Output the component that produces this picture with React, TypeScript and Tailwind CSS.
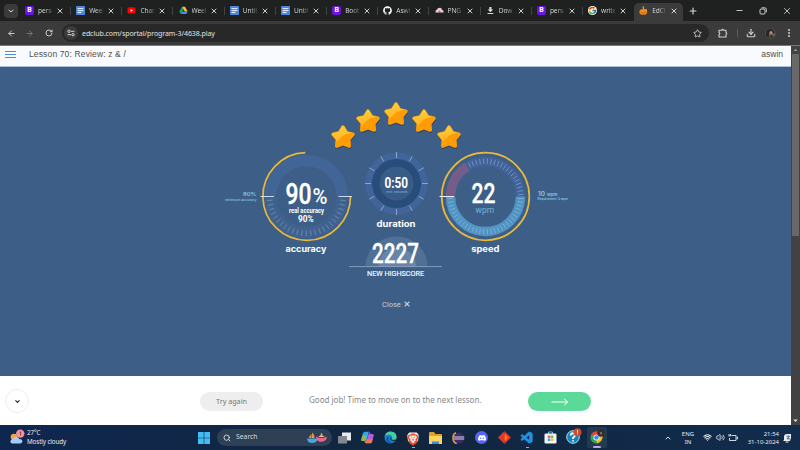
import React from "react";
import { ArrowLeft, ArrowRight, RotateCw, Star, Download, EllipsisVertical, X, Plus, Minus, ChevronDown, ChevronUp, Search, Wifi, Volume2 } from "lucide-react";
import { FaGithub } from "react-icons/fa";
import { FcGoogle } from "react-icons/fc";
import { SiDiscord, SiBrave } from "react-icons/si";
import { VscVscode } from "react-icons/vsc";

const Boot = () => (
  <span className="flex h-[9px] w-[9px] shrink-0 items-center justify-center rounded-[2px] bg-[#6a14dc] font-['Roboto',sans-serif] text-[7px] font-bold leading-none text-white">B</span>
);
const Doc = () => (
  <svg viewBox="0 0 9 9" className="h-[9px] w-[9px] shrink-0">
    <rect width="9" height="9" rx="0.8" fill="#4a86e4" />
    <path d="M1.6 2.6h5.8M1.6 4.6h5.8M1.6 6.5h3.8" stroke="#fff" strokeWidth="0.9" />
  </svg>
);
const Tube = () => (
  <svg viewBox="0 0 9 9" className="h-[9px] w-[9px] shrink-0">
    <rect x="0.5" y="1.3" width="8" height="6.2" rx="1.5" fill="#f00" />
    <path d="M3.6 3l2.6 1.4-2.6 1.4z" fill="#fff" />
  </svg>
);
const Drive = () => (
  <svg viewBox="0 0 9 9" className="h-[9px] w-[9px] shrink-0">
    <path d="M3 .8L.3 5.6l1.4 2.5L4.5 3.4z" fill="#1ea362" />
    <path d="M3 .8h3l2.7 4.8H5.8z" fill="#fbc02d" />
    <path d="M3.1 5.6h5.6L7.3 8.1H1.7z" fill="#4688f4" />
  </svg>
);
const Cloud = () => (
  <svg viewBox="0 0 9 9" className="h-[9px] w-[9px] shrink-0">
    <path d="M.4 6.400Q.2 4 2 3.600 2.800 1.600 4.600 1.900 6.600 1.600 7 3.800 8.900 4.200 8.600 6.400z" fill="#e8c9cd" />
    <path d="M3 6.400l1.500-2L6 6.400z" fill="#9d6470" />
  </svg>
);
const Down = () => (
  <svg viewBox="0 0 9 9" className="h-[9px] w-[9px] shrink-0">
    <path d="M3.3 1h2.2v2.6h1.7L4.4 6.3 1.6 3.6h1.7zM1.5 7h5.8v.9H1.5z" fill="#d6d6d6" />
  </svg>
);
const Pumpkin = () => (
  <svg viewBox="0 0 9 9" className="h-[9px] w-[9px] shrink-0">
    <ellipse cx="4.3" cy="5.9" rx="3.9" ry="2.8" fill="#f08a18" />
    <path d="M4 4L3.5.6 5 .3l.2 3.4 2.8-1-.4 2z" fill="#ee9420" />
    <path d="M2 6.3q2.4 1.6 4.8 0" stroke="#a84d06" strokeWidth=".6" fill="none" />
  </svg>
);

const tabs: { icon: React.ReactNode; label: string }[] = [
  { icon: <Boot />, label: "perso" },
  { icon: <Doc />, label: "Week" },
  { icon: <Tube />, label: "Chan" },
  { icon: <Drive />, label: "Week" },
  { icon: <Doc />, label: "Untitl" },
  { icon: <Doc />, label: "Untitl" },
  { icon: <Boot />, label: "Boot" },
  { icon: <FaGithub className="h-[9px] w-[9px] shrink-0 text-white" />, label: "Aswi" },
  { icon: <Cloud />, label: "PNG" },
  { icon: <Down />, label: "Dow" },
  { icon: <Boot />, label: "perso" },
  { icon: <FcGoogle className="h-[9px] w-[9px] shrink-0 rounded-full bg-white" />, label: "write" },
  { icon: <Pumpkin />, label: "EdClu" },
];

function TabStrip() {
  return (
    <div className="flex h-[21px] items-center bg-[#1f2120] text-[#dcdcdc]">
      <div className="ml-1 flex h-[14px] w-[14px] shrink-0 items-center justify-center rounded-[4px] bg-[#3a3b3a]">
        <ChevronDown className="h-[8px] w-[8px]" strokeWidth={3} />
      </div>
      <div className="ml-[2px] flex h-full">
        {tabs.map((t, i) => {
          const active = i === tabs.length - 1;
          return (
            <div
              key={i}
              className={
                active
                  ? "mt-[3px] flex h-[18px] w-[49px] items-center rounded-t-[5px] bg-[#3b3b3b] pb-[3px] pl-[5px]"
                  : "flex h-[21px] w-[51.2px] items-center pl-[5px]"
              }
            >
              {t.icon}
              <span className="ml-[4px] w-[14px] shrink-0 overflow-hidden whitespace-nowrap bg-gradient-to-r from-[#e0e0e0] from-50% to-[#50504f] bg-clip-text font-['Noto_Sans',sans-serif] text-[6.600px] leading-[10px] tracking-[-0.1px] text-transparent">{t.label}</span>
              <X className="ml-[4px] h-[8px] w-[8px] shrink-0" strokeWidth={2.800} />
              {!active && i !== tabs.length - 2 && <span className="ml-[6px] h-[8px] w-px bg-[#424342]" />}
            </div>
          );
        })}
      </div>
      <Plus className="ml-[5px] h-[10px] w-[10px] shrink-0" strokeWidth={2.600} />
      <Minus className="ml-[37px] h-[9px] w-[9px] shrink-0" strokeWidth={2.300} />
      <svg viewBox="0 0 8 8" className="ml-[15px] h-[8px] w-[8px] shrink-0" fill="none" stroke="currentColor" strokeWidth="0.9">
        <rect x="1" y="2" width="5" height="5" rx="1" />
        <path d="M2.6.8h3.2Q7.3.8 7.3 2.3v3" />
      </svg>
      <X className="ml-[15px] h-[10px] w-[10px] shrink-0" strokeWidth={2} />
    </div>
  );
}

function Toolbar() {
  return (
    <div className="flex h-[25px] items-center border-b border-[#777a76] bg-[#3b3b3b] text-[#d2d2d2]">
      <ArrowLeft className="ml-[7px] h-[9px] w-[9px]" strokeWidth={2.5} />
      <ArrowRight className="ml-[9px] h-[9px] w-[9px] text-[#777]" strokeWidth={2.5} />
      <RotateCw className="ml-[11px] h-[8px] w-[8px]" strokeWidth={2.8} />
      <div className="ml-[9px] flex h-[18px] w-[647px] items-center rounded-full bg-[#282828]">
        <span className="ml-[2px] flex h-[14px] w-[14px] items-center justify-center rounded-full bg-[#3b3b3b]">
          <svg viewBox="0 0 8 8" className="h-[8px] w-[8px]" fill="none" stroke="currentColor" strokeWidth="1">
            <circle cx="2" cy="2.300" r="1.200" /><path d="M4 2.300h3.500M.5 5.700H4" /><circle cx="6" cy="5.700" r="1.200" />
          </svg>
        </span>
        <span className="ml-[4px] w-[140px] whitespace-nowrap font-['Noto_Sans',sans-serif] text-[7px] leading-none tracking-[-0.070px] text-[#e2e2e2]">edclub.com/sportal/program-3/4638.play</span>
        <Star className="ml-auto mr-[7px] h-[9px] w-[9px]" strokeWidth={2.4} />
      </div>
      <svg viewBox="0 0 10 10" className="ml-[9px] h-[10px] w-[10px]" fill="none" stroke="currentColor" strokeWidth="1.100" strokeLinejoin="round">
        <path d="M1 2.200h2.800q.9-1.600 1.800 0H8v2.300q1.600.9 0 1.800V9H1V6.700q1.700-1.100 0-2.200z" />
      </svg>
      <span className="ml-[9px] h-[8px] w-px bg-[#5d5d5d]" />
      <Download className="ml-[8px] h-[10px] w-[10px]" strokeWidth={2.6} />
      <svg viewBox="0 0 11 11" className="ml-[9px] h-[11px] w-[11px]">
        <circle cx="5.5" cy="5.5" r="5" fill="#6b5c55" />
        <path d="M1 8V4Q3 0 7 1l3 3-1 2-2-2-3 1v5z" fill="#2b2725" />
        <circle cx="6" cy="4.5" r="1.5" fill="#b48d7b" />
        <path d="M4 10l2-3 3 2z" fill="#252b32" />
      </svg>
      <EllipsisVertical className="ml-[8px] h-[10px] w-[10px]" strokeWidth={2.8} />
    </div>
  );
}

const STAR = "13,3 16.53,8.65 22.99,10.26 18.71,15.35 19.17,21.99 13,19.5 6.83,21.99 7.29,15.35 3.01,10.26 9.47,8.65";

function GoldStar({ n }: { n: number }) {
  return (
    <svg viewBox="0 0 26 27" className="h-[27px] w-[26px]" strokeLinejoin="round">
      <defs>
        <linearGradient id={`gold${n}`} gradientUnits="userSpaceOnUse" x1="0" y1="2" x2="0" y2="24">
          <stop offset="0" stopColor="#ffca38" />
          <stop offset="1" stopColor="#ffaf1a" />
        </linearGradient>
        <mask id={`shape${n}`}><polygon points={STAR} fill="#fff" stroke="#fff" strokeWidth="2.6" /></mask>
      </defs>
      <polygon points={STAR} fill="#33404c" stroke="#33404c" strokeWidth="3.4" opacity=".7" transform="translate(.4 1.4)" />
      <polygon points={STAR} fill="#d8901d" stroke="#d8901d" strokeWidth="3.6" />
      <polygon points={STAR} fill={`url(#gold${n})`} stroke={`url(#gold${n})`} strokeWidth="2.6" />
      <path d="M3 19Q8 17.500 11 13.500T24 8.500V27H3z" fill="#ff9c05" mask={`url(#shape${n})`} />
    </svg>
  );
}

function Ticks({ cx, cy, r1, r2, from, to, step, color, width }: { cx: number; cy: number; r1: number; r2: number; from: number; to: number; step: number; color: string; width: number }) {
  const lines: React.ReactNode[] = [];
  for (let a = from; a <= to; a += step) {
    const t = (a * Math.PI) / 180;
    lines.push(<line key={a} x1={cx + r1 * Math.cos(t)} y1={cy + r1 * Math.sin(t)} x2={cx + r2 * Math.cos(t)} y2={cy + r2 * Math.sin(t)} />);
  }
  return <g stroke={color} strokeWidth={width}>{lines}</g>;
}

function Accuracy() {
  return (
    <svg viewBox="220 150 135 110" className="h-[110px] w-[135px] overflow-visible">
      <path d="M270.300 196.500a36 36 0 0 1 72 0" fill="none" stroke="#426597" strokeWidth="11.500" />
      <path d="M270.300 196.500a36 36 0 0 0 72 0" fill="none" stroke="#40628f" strokeWidth="11.500" />
      <Ticks cx={306.3} cy={196.5} r1={34} r2={39.5} from={6} to={174} step={7} color="#7390b8" width={0.8} />
      <path d="M305.300 152.700A43.800 43.800 0 1 0 350.500 196.500" fill="none" stroke="#e9b93b" strokeWidth="1.700" />
      <path d="M260.500 196.500H274M338.500 196.500H352" stroke="#dfe7f0" strokeWidth=".9" />
      <g fill="#fff" textAnchor="middle" fontFamily="Roboto, sans-serif">
        <text x="298.400" y="203.800" fontSize="29" fontWeight="500" stroke="#fff" strokeWidth=".35" textLength="26" lengthAdjust="spacingAndGlyphs">90</text>
        <text x="320.100" y="203.800" fontSize="22" fontWeight="500" textLength="15" lengthAdjust="spacingAndGlyphs">%</text>
        <text x="306.500" y="212.500" fontSize="6.300" fontWeight="700" textLength="35" lengthAdjust="spacingAndGlyphs">real accuracy</text>
        <text x="305.800" y="222.300" fontSize="9" fontWeight="700" textLength="15.500" lengthAdjust="spacingAndGlyphs">90%</text>
        <text x="306" y="251.500" fontSize="8.600" fontWeight="700" fontFamily="Inter, sans-serif" textLength="41" lengthAdjust="spacingAndGlyphs">accuracy</text>
      </g>
      <g fill="#82cbed" textAnchor="end" fontFamily="Inter, sans-serif">
        <text x="256.500" y="195.600" fontSize="5.300" fontWeight="600" textLength="13.500" lengthAdjust="spacingAndGlyphs">80%</text>
        <text x="256.500" y="200.500" fontSize="3.300" fontWeight="500" textLength="31.500" lengthAdjust="spacingAndGlyphs">minimum accuracy</text>
      </g>
    </svg>
  );
}

function Duration() {
  return (
    <svg viewBox="355 150 82 80" className="h-[80px] w-[82px] overflow-visible">
      <circle cx="396.500" cy="183.500" r="31" fill="#41659a" />
      <circle cx="396.500" cy="183.500" r="24.500" fill="#284d7b" />
      <circle cx="396.500" cy="183.500" r="17" fill="#385b87" />
      <Ticks cx={396.5} cy={183.5} r1={25.5} r2={31.5} from={0} to={330} step={30} color="#9fb8d8" width={0.8} />
      <g textAnchor="middle" fontFamily="Roboto, sans-serif">
        <text x="396.300" y="188.300" fill="#fff" fontSize="15.500" fontWeight="700" textLength="23.500" lengthAdjust="spacingAndGlyphs">0:50</text>
        <text x="397" y="193" fill="#75b5d8" fontSize="3.300" textLength="21.500" lengthAdjust="spacingAndGlyphs">min: seconds</text>
        <text x="396" y="226.600" fill="#fff" fontSize="8.600" fontWeight="700" fontFamily="Inter, sans-serif" textLength="39" lengthAdjust="spacingAndGlyphs">duration</text>
      </g>
    </svg>
  );
}

function Highscore() {
  return (
    <svg viewBox="349 235 93 44" className="h-[44px] w-[93px] shrink-0 overflow-visible">
      <path d="M365.500 266.500a31 30 0 0 1 62 0z" fill="#6381a6" opacity=".5" />
      <path d="M378 266.500a19 19 0 0 1 38 0z" fill="#7f98b8" opacity=".5" />
      <path d="M349 266.600H442" stroke="#8ba2bf" strokeWidth=".9" />
      <g fill="#fff" textAnchor="middle" fontFamily="Roboto, sans-serif">
        <text x="395.500" y="262.500" fontSize="28.500" fontWeight="500" stroke="#fff" strokeWidth=".35" textLength="47" lengthAdjust="spacingAndGlyphs">2227</text>
        <text x="395.500" y="276" fontSize="7.300" stroke="#fff" strokeWidth=".12" textLength="57" lengthAdjust="spacingAndGlyphs">NEW HIGHSCORE</text>
      </g>
    </svg>
  );
}

function Speed() {
  return (
    <svg viewBox="437 150 135 110" className="h-[110px] w-[135px] overflow-visible">
      <path d="M450.500 196.500a35 35 0 0 1 70 0" fill="none" stroke="#42629a" strokeWidth="9.500" />
      <path d="M450.500 196.500A35 35 0 0 1 467 166.800" fill="none" stroke="#705e8b" strokeWidth="9.500" />
      <path d="M450.500 196.500a35 35 0 0 0 70 0" fill="none" stroke="#5194c3" strokeWidth="9.500" />
      <Ticks cx={485.5} cy={196.5} r1={32.5} r2={38} from={183} to={240} step={6} color="#8a5680" width={0.9} />
      <Ticks cx={485.5} cy={196.5} r1={32.5} r2={38} from={243} to={357} step={6} color="#7e9cc8" width={0.8} />
      <Ticks cx={485.5} cy={196.5} r1={32.5} r2={38} from={3} to={177} step={6} color="#83b5da" width={0.8} />
      <circle cx="485.500" cy="196.500" r="43.800" fill="none" stroke="#e9b93b" strokeWidth="1.700" />
      <path d="M439.500 196.500H454" stroke="#eef1f5" strokeWidth="1" />
      <g textAnchor="middle" fontFamily="Roboto, sans-serif">
        <text x="483.500" y="203.300" fill="#fff" fontSize="28.500" fontWeight="500" stroke="#fff" strokeWidth=".35" textLength="24" lengthAdjust="spacingAndGlyphs">22</text>
        <text x="484.800" y="213" fill="#74b2d8" fontSize="9.500" textLength="18.500" lengthAdjust="spacingAndGlyphs">wpm</text>
        <text x="485.300" y="251.500" fill="#fff" fontSize="8.600" fontWeight="700" fontFamily="Inter, sans-serif" textLength="28" lengthAdjust="spacingAndGlyphs">speed</text>
      </g>
      <g fill="#82cbed" fontFamily="Inter, sans-serif">
        <text x="538" y="195.500" fontSize="5.800" fontWeight="600" textLength="7" lengthAdjust="spacingAndGlyphs">10</text>
        <text x="547" y="195.500" fontSize="4.300" fontWeight="600" textLength="10.500" lengthAdjust="spacingAndGlyphs">wpm</text>
        <text x="537.500" y="200" fontSize="3" fontWeight="600" textLength="30.500" lengthAdjust="spacingAndGlyphs">Requirement: 5 wpm</text>
      </g>
    </svg>
  );
}

function Results() {
  return (
    <main className="flex h-[309px] flex-col bg-[#3d5f87]">
      <div className="ml-[330px] flex pt-[34px]">
        <div className="mt-[23px] -mr-px h-[27px] w-[26px] shrink-0"><GoldStar n={0} /></div>
        <div className="mt-[7px] mr-[2px] h-[27px] w-[26px] shrink-0"><GoldStar n={1} /></div>
        <div className="mr-[2px] h-[27px] w-[26px] shrink-0"><GoldStar n={2} /></div>
        <div className="mt-[7px] -mr-px h-[27px] w-[26px] shrink-0"><GoldStar n={3} /></div>
        <div className="mt-[23px] h-[27px] w-[26px] shrink-0"><GoldStar n={4} /></div>
      </div>
      <div className="-mt-px ml-[220px] flex">
        <Accuracy />
        <div className="flex w-[82px] flex-col">
          <Duration />
          <div className="-mx-[6px] mt-[5px] flex"><Highscore /></div>
        </div>
        <Speed />
      </div>
      <div className="mt-[20px] flex h-[10px] items-center gap-[2px] pl-[382px] font-['Roboto',sans-serif] text-[7.500px] text-[#c2cedd]">
        <span className="mt-px">Close</span>
        <X className="-mt-px h-[8px] w-[8px]" strokeWidth={3.2} />
      </div>
    </main>
  );
}

function Footer() {
  return (
    <div className="flex h-[49px] items-center bg-white font-['Noto_Sans',sans-serif] text-[#777]">
      <div className="ml-[5px] mt-px flex h-[24px] w-[24px] items-center justify-center rounded-full border border-[#ededed]">
        <ChevronDown className="h-[7px] w-[7px] text-[#222]" strokeWidth={3.8} />
      </div>
      <button className="ml-[171px] mt-[2px] h-[19px] w-[63px] rounded-full bg-[#eee] text-[7.200px] leading-none">Try again</button>
      <p className="mb-px ml-[46px] w-[173px] whitespace-nowrap text-[8px] leading-none text-[#888]">Good job! Time to move on to the next lesson.</p>
      <button className="ml-[46px] mt-[2px] flex h-[19px] w-[63px] items-center justify-center rounded-full bg-[#5bd998]">
        <svg viewBox="0 0 18 8" className="mt-px h-[8px] w-[18px]" fill="none" stroke="#fff" strokeWidth="1">
          <path d="M.5 4h16M13.200.8L16.700 4l-3.500 3.200" />
        </svg>
      </button>
    </div>
  );
}

function Taskbar() {
  return (
    <div className="flex h-[25px] items-center bg-linear-to-r from-[#0f2750] via-[#11263d] to-[#122c4e] font-['Noto_Sans',sans-serif] text-[6.500px] text-[#e5eaf0]">
      <svg viewBox="0 0 15 17" className="ml-[10px] h-[17px] w-[15px] shrink-0">
        <circle cx="4" cy="8" r="3.300" fill="#eba54d" />
        <path d="M2.500 14.500q-2.500-.4-2-2.600.3-1.600 2.200-1.700.9-2.600 3.500-2.500 2.300.1 3 2.300 3 .1 3.200 2.300 0 2-2 2.200z" fill="#a7c9f5" />
        <circle cx="10.300" cy="4.600" r="4.200" fill="#f49499" />
        <path d="M9.600 3.300l1-.6v3.800" stroke="#663039" fill="none" strokeWidth=".8" />
      </svg>
      <div className="ml-[2px] w-[60px] shrink-0 whitespace-nowrap text-[6.300px] leading-[8.500px] tracking-[-0.120px]">
        <div>27°C</div>
        <div>Mostly cloudy</div>
      </div>
      <svg viewBox="0 0 12 12" className="ml-[111px] h-[12px] w-[12px] shrink-0">
        <path d="M0 0h5.700v5.700H0zM6.300 0H12v5.700H6.300zM0 6.300h5.700V12H0zM6.300 6.300H12V12H6.300z" fill="#43bef4" />
      </svg>
      <div className="ml-[7px] flex h-[17px] w-[115px] shrink-0 items-center rounded-full bg-[#2f4055]">
        <Search className="ml-[6px] h-[8px] w-[8px]" strokeWidth={2.5} />
        <span className="ml-[5px] text-[6.800px] text-[#d5dbe3]">Search</span>
        <svg viewBox="0 0 20 13" className="ml-auto mr-[5px] h-[13px] w-[20px]">
          <path d="M0 7.500h10.500Q10 12 5.200 12T0 7.500z" fill="#4ba7d5" />
          <path d="M5 7V1.500Q8 4 7.500 7zM2 7q0-2 2.500-4v4z" fill="#eb9140" />
          <path d="M9 5.500q5 3 11 0-.5 5-5.500 5.300T9 5.500z" fill="#ec6293" />
          <path d="M11 6q3-3 7 0z" fill="#f7c0d4" />
          <path d="M13 5.500l1.500-4 1.500 4z" fill="#f3b248" />
        </svg>
      </div>
      <svg viewBox="0 0 13 12" className="ml-[6px] h-[12px] w-[13px] shrink-0">
        <path d="M4 .5h9v8H4z" fill="#e9eaec" /><path d="M0 4h9v7.500H0z" fill="#83888f" />
      </svg>
      <svg viewBox="0 0 13 13" className="ml-[10px] h-[13px] w-[13px] shrink-0">
        <path d="M3.800.8H8L6 8.300Q5.500 10 4 10H1.200Q0 10 .3 8.500L2 2.300Q2.500.8 3.800.8z" fill="#32a8dc" />
        <path d="M1.300 4.500h4.200L4.500 8.500Q4 10 2.500 10H1.200Q0 10 .3 8.500z" fill="#83c052" />
        <path d="M7 .8h1.200Q9 .8 9.400 2l.7 2H7.300z" fill="#2863dc" />
        <path d="M9 3h2.800q1.300 0 1 1.500L11 10.700q-.5 1.500-1.800 1.500H5L7 4.500Q7.500 3 9 3z" fill="#b65cd6" />
        <path d="M5 12.200q-.9 0-1.300-1.200L3.300 9.800 5 10l.8-1.800h6L11 10.700q-.5 1.500-1.800 1.500z" fill="#ee7656" />
      </svg>
      <svg viewBox="0 0 13 13" className="ml-[10px] h-[13px] w-[13px] shrink-0">
        <circle cx="6.500" cy="6.500" r="6" fill="#1683d3" />
        <path d="M.7 5Q2 .4 6.500.4 12.500.6 12.600 6q-.2 2.500-3 2.500-2 0-1.500-1 1-2.500-2-3.500Q3 3 .7 5z" fill="#42cfa3" />
        <path d="M5 5.500Q3 10 8 12 3 12 2.300 8 2.500 5.500 5 5.500z" fill="#0e529e" />
        <path d="M7 6.500q-1.500 2 1 3 2 .7 4-.2" stroke="#11283f" fill="none" strokeWidth="1" />
      </svg>
      <div className="ml-[9px] flex h-[22px] w-[14px] shrink-0 flex-col items-center justify-between pt-[5px] pb-px">
        <svg viewBox="0 0 12 13" className="h-[13px] w-[12px] shrink-0"><path d="M2.300.5h7.400l2 2.500-.7 6L6 12.800 1 9 .3 3z" fill="#fff" /></svg>
        <SiBrave className="-mt-[13px] h-[13px] w-[12px] shrink-0 text-[#f04c29]" />
        <span className="h-px w-[3px] shrink-0 bg-[#a6afb8]" />
      </div>
      <svg viewBox="0 0 13 12" className="ml-[9px] h-[12px] w-[13px] shrink-0">
        <path d="M0 1q0-1 1-1h4l1.500 2H12q1 0 1 1v9H0z" fill="#e2a028" /><path d="M0 4h13v7q0 1-1 1H1q-1 0-1-1z" fill="#fcd35d" /><path d="M3 9.500h7V12H3z" fill="#358ed5" />
      </svg>
      <svg viewBox="0 0 13 12" className="ml-[10px] h-[12px] w-[13px] shrink-0">
        <path d="M4 0Q-.5 1.500.3 7T5 12z" fill="#e29445" /><circle cx="7" cy="6" r="5.400" fill="#3b2b67" /><path d="M1.800 5h10.400M1.800 7h10.400" stroke="#ddd7ea" strokeWidth="1" />
      </svg>
      <span className="ml-[10px] flex h-[13px] w-[13px] shrink-0 items-center justify-center rounded-full bg-[#5865f2]"><SiDiscord className="h-[8px] w-[8px] text-white" /></span>
      <svg viewBox="0 0 13 13" className="ml-[10px] h-[13px] w-[13px] shrink-0">
        <path d="M6.500 0v13L0 6.500z" fill="#ef3128" /><path d="M6.500 0L13 6.500 6.500 13z" fill="#ff2b1c" /><path d="M6.500 2.500L10 6.500l-3.500 4z" fill="#fa7d1b" />
      </svg>
      <div className="ml-[9px] flex h-[22px] w-[14px] shrink-0 flex-col items-center justify-between pt-[4px] pb-px">
        <VscVscode className="h-[14px] w-[14px] shrink-0 text-[#2493df]" stroke="#2493df" strokeWidth={0.7} /><span className="h-px w-[3px] bg-[#a6afb8]" />
      </div>
      <svg viewBox="0 0 13 13" className="ml-[10px] h-[13px] w-[13px] shrink-0">
        <path d="M4.500 3V1h4v2" stroke="#70b7e5" fill="none" /><rect y="2.500" x=".5" width="12" height="10" rx="1.300" fill="#f1f3f5" />
        <path d="M3.800 4.500h2.500V7H3.800z" fill="#ed6540" /><path d="M6.800 4.500h2.500V7H6.800z" fill="#7bba48" /><path d="M3.800 7.500h2.500V10H3.800z" fill="#32a4df" /><path d="M6.800 7.500h2.500V10H6.800z" fill="#efbb3a" />
      </svg>
      <svg viewBox="0 0 16 16" className="ml-[9px] mt-[-3px] h-[16px] w-[16px] shrink-0">
        <circle cx="7" cy="9" r="6.300" fill="#1582bc" stroke="#b8dcec" strokeWidth="1" />
        <path d="M4.500 7.500Q5 5 7.300 5.300q2.600.5 1.600 2.700L7 9.800V11M7 12.300V13.500" fill="none" stroke="#fff" strokeWidth="1.800" />
        <circle cx="11.500" cy="4.300" r="4" fill="#c94a2c" /><path d="M11.500 2v2.800M11.500 5.500v1" stroke="#fff" strokeWidth=".9" />
      </svg>
      <div className="ml-[5px] flex h-[21px] w-[20px] shrink-0 flex-col items-center justify-between rounded-[2px] bg-[#233b50] pt-[2px]">
        <svg viewBox="0 0 15 15" className="h-[15px] w-[15px]">
          <circle cx="6.500" cy="8.500" r="6" fill="#35a853" /><path d="M6.500 8.500L1.300 5.500Q3 2.500 6.500 2.500h6v6z" fill="#ea4335" /><path d="M6.500 8.500L12.500 6q.5 6-5.500 8.500z" fill="#fbc116" />
          <circle cx="6.500" cy="8.500" r="3" fill="#fff" /><circle cx="6.500" cy="8.500" r="2.300" fill="#4285f4" /><circle cx="11" cy="4" r="3.800" fill="#352e2c" /><path d="M10 3l2 .5-.3 2-1.300-.3z" fill="#9a7b6b" />
        </svg>
        <span className="h-[2px] w-[8px] rounded-full bg-[#c4a4df]" />
      </div>
      <ChevronUp className="ml-[57px] h-[8px] w-[8px] shrink-0" strokeWidth={2.8} />
      <div className="ml-[5px] w-[22px] shrink-0 text-center text-[6px] leading-[8px]"><div>ENG</div><div>IN</div></div>
      <Wifi className="ml-[4px] h-[9px] w-[9px] shrink-0" strokeWidth={2.8} />
      <Volume2 className="ml-[4px] h-[9px] w-[9px] shrink-0" strokeWidth={2.2} />
      <svg viewBox="0 0 10 8" className="ml-[3px] h-[8px] w-[10px] shrink-0" fill="none" stroke="currentColor" strokeWidth=".9">
        <path d="M3.500 1.500H8v5H1.500V4M8.500 3h1v2h-1M.3 1.800h3M1 0v1.500M2.500 0v1.500" />
      </svg>
      <div className="ml-[7px] w-[34px] shrink-0 whitespace-nowrap text-right text-[6px] leading-[8px]"><div>21:54</div><div>31-10-2024</div></div>
      <svg viewBox="0 0 9 10" className="ml-[4px] h-[10px] w-[9px] shrink-0">
        <path d="M1 7V4Q1 1 4 1h4v4L7 8H0z" fill="#e9edf2" /><path d="M3.500 3.200h3L4 5.800h3" fill="none" stroke="#203552" strokeWidth=".8" /><path d="M2.500 9h3" stroke="#e9edf2" />
      </svg>
    </div>
  );
}

export default function App() {
  return (
    <div className="flex h-[450px] w-[800px] flex-col overflow-hidden">
      <TabStrip />
      <Toolbar />
      <div className="flex h-[379px]">
        <div className="w-[791px] shrink-0">
          <header className="flex h-[21px] items-center border-b border-[#a9bfd6] bg-[#f9fafe] font-['Liberation_Sans',sans-serif] text-[8.500px] text-[#505050]">
            <div className="ml-[5px] -mt-[3px] flex w-[11px] flex-col gap-[2px]">
              <span className="h-px bg-[#4a8fd0]" /><span className="h-px bg-[#4a8fd0]" /><span className="h-px bg-[#4a8fd0]" />
            </div>
            <span className="-mt-[3px] ml-[13px] whitespace-nowrap tracking-[0.140px]">Lesson 70: Review: z &amp; /</span>
            <span className="-mt-[3px] ml-auto mr-[8px]">aswin</span>
          </header>
          <Results />
          <Footer />
        </div>
        <div className="flex w-[9px] flex-col items-center justify-between bg-[#424242]">
          <svg viewBox="0 0 9 8" className="h-[8px] w-[9px]"><path d="M2.500 5L4.500 2.700 6.500 5z" fill="#969696" /></svg>
          <div className="mb-auto h-[182px] w-[7px] bg-[#686868]" />
          <svg viewBox="0 0 9 8" className="h-[8px] w-[9px]"><path d="M2.200 2.500L4.500 5 6.800 2.500z" fill="#ddd" /></svg>
        </div>
      </div>
      <Taskbar />
    </div>
  );
}
